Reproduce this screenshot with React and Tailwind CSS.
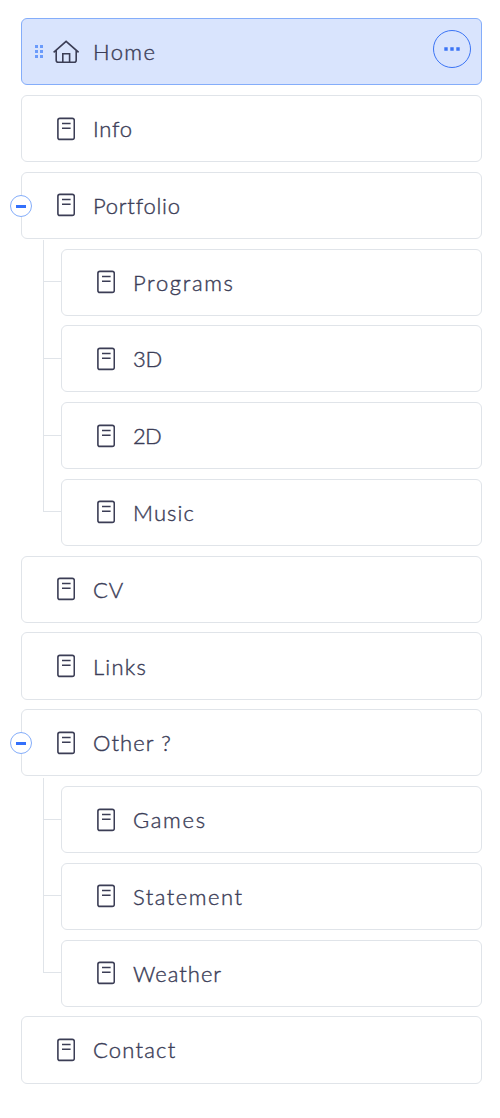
const pages = [
  { label: 'Home', home: true, gap: 'h-0', tracking: 'tracking-[1.4px]' },
  { label: 'Info', gap: 'h-[10px]', tracking: 'tracking-[0.7px]' },
  {
    label: 'Portfolio', gap: 'h-[10px]', high: true, tracking: 'tracking-[0.75px]', trunk: 'pt-px',
    children: [
      { label: 'Programs', gap: 'h-[9px]', high: true, elbow: 'h-[42px]', tracking: 'tracking-[1.65px]' },
      { label: '3D', gap: 'h-[9px]', elbow: 'h-[43px]', tracking: 'tracking-[-0.2px]' },
      { label: '2D', gap: 'h-[10px]', elbow: 'h-[44px]', tracking: 'tracking-[-0.8px]' },
      { label: 'Music', gap: 'h-[10px]', high: true, elbow: 'h-[43px]', tracking: 'tracking-[1.1px]' },
    ],
  },
  { label: 'CV', gap: 'h-[10px]', high: true, tracking: 'tracking-[0.9px]' },
  { label: 'Links', gap: 'h-[9px]', tall: true, tracking: 'tracking-[1.2px]' },
  {
    label: 'Other ?', gap: 'h-[9px]', tracking: 'tracking-[1.1px]', trunk: 'pt-[2px]',
    children: [
      { label: 'Games', gap: 'h-[8px]', elbow: 'h-[42px]', tracking: 'tracking-[1.7px]' },
      { label: 'Statement', gap: 'h-[10px]', high: true, elbow: 'h-[43px]', tracking: 'tracking-[1.5px]' },
      { label: 'Weather', gap: 'h-[10px]', high: true, elbow: 'h-[43px]', tracking: 'tracking-[1px]' },
    ],
  },
  { label: 'Contact', gap: 'h-[9px]', tall: true, tracking: 'tracking-[1.2px]' },
];

function PageIcon() {
  return (
    <svg width="18" height="24" viewBox="0 0 18 24" fill="none" stroke="#3b3d55" strokeWidth="1.6">
      <rect x="0.9" y="1.4" width="16.4" height="21" rx="2" />
      <path d="M5 6.5h8.6M5 11.3h8.6" />
    </svg>
  );
}

function HomeIcon() {
  return (
    <svg width="26" height="24" viewBox="0 0 26 24" fill="none" stroke="#3b3d55" strokeWidth="1.6">
      <path d="M0.6 12.3 13.1 1.4 25.6 12.3M3.2 10.5V20.2c0 1.2.8 2 2 2H21.2c1.2 0 2-.8 2-2V10.5M9.8 22V13.7H16.6V22" />
    </svg>
  );
}

function DragHandle() {
  return (
    <div className="grid grid-cols-[3px_3px] gap-[2px]">
      {[0, 1, 2, 3, 4, 5].map((n) => <span key={n} className="size-[3px] bg-[#6b9bfb]" />)}
    </div>
  );
}

function Card({ page }) {
  return (
    <div
      className={`relative flex w-full rounded-[6px] border ${page.tall ? 'h-[68px]' : 'h-[67px]'} ${
        page.home ? 'border-[#84adfa] bg-[#d9e4fd]' : 'border-[#e0e4e9] bg-white'
      }`}
    >
      <div className="flex w-[71px] shrink-0">
        <div className="w-[31px] shrink-0 pl-[13px] pt-[26px]">{page.home && <DragHandle />}</div>
        <div className={page.home ? 'pt-[21px]' : page.high ? 'pl-1 pt-5' : 'pl-1 pt-[21px]'}>
          {page.home ? <HomeIcon /> : <PageIcon />}
        </div>
      </div>
      <span className={`whitespace-nowrap text-[22px] font-light leading-7 text-[#3b3d57] [-webkit-text-stroke:0.4px_#3b3d57] ${page.label === 'Links' ? 'pt-5' : 'pt-[19px]'} ${page.tracking}`}>
        {page.label}
      </span>
      {page.home && (
        <button aria-label="More actions" className="ml-auto mr-[10px] mt-[11px] flex size-[38px] items-center justify-center rounded-full border border-[#3b74f5]">
          <svg width="16" height="4" viewBox="0 0 16 4" fill="#3b74f5">
            <path d="M.3.3h3.4v3.4H.3zM6.3.3h3.4v3.4H6.3zM12.3.3h3.4v3.4h-3.4z" />
          </svg>
        </button>
      )}
      {page.children && (
        <button aria-label="Collapse" className="absolute -left-3 top-[22px] flex size-[22px] items-center justify-center rounded-full border border-[#84adfa] bg-white">
          <span className="h-[3px] w-[10px] bg-[#3370fb]" />
        </button>
      )}
    </div>
  );
}

function Branch({ page, last }) {
  return (
    <div className="flex">
      <div className="flex w-[18px] shrink-0 flex-col">
        <div className={`shrink-0 border-b border-l border-[#e0e4e9] ${page.elbow}`} />
        {!last && <div className="grow border-l border-[#e0e4e9]" />}
      </div>
      <div className="grow">
        <div className={page.gap} />
        <Card page={page} />
      </div>
    </div>
  );
}

export default function App() {
  return (
    <main className="min-h-[1118px] bg-white pl-[21px] pr-[18px] pt-[18px] font-['Lato',sans-serif]">
      {pages.map((page) => (
        <div key={page.label}>
          <div className={page.gap} />
          <Card page={page} />
          {page.children && (
            <div className={`pl-[22px] ${page.trunk}`}>
              {page.children.map((child, i) => (
                <Branch key={child.label} page={child} last={i === page.children.length - 1} />
              ))}
            </div>
          )}
        </div>
      ))}
    </main>
  );
}
